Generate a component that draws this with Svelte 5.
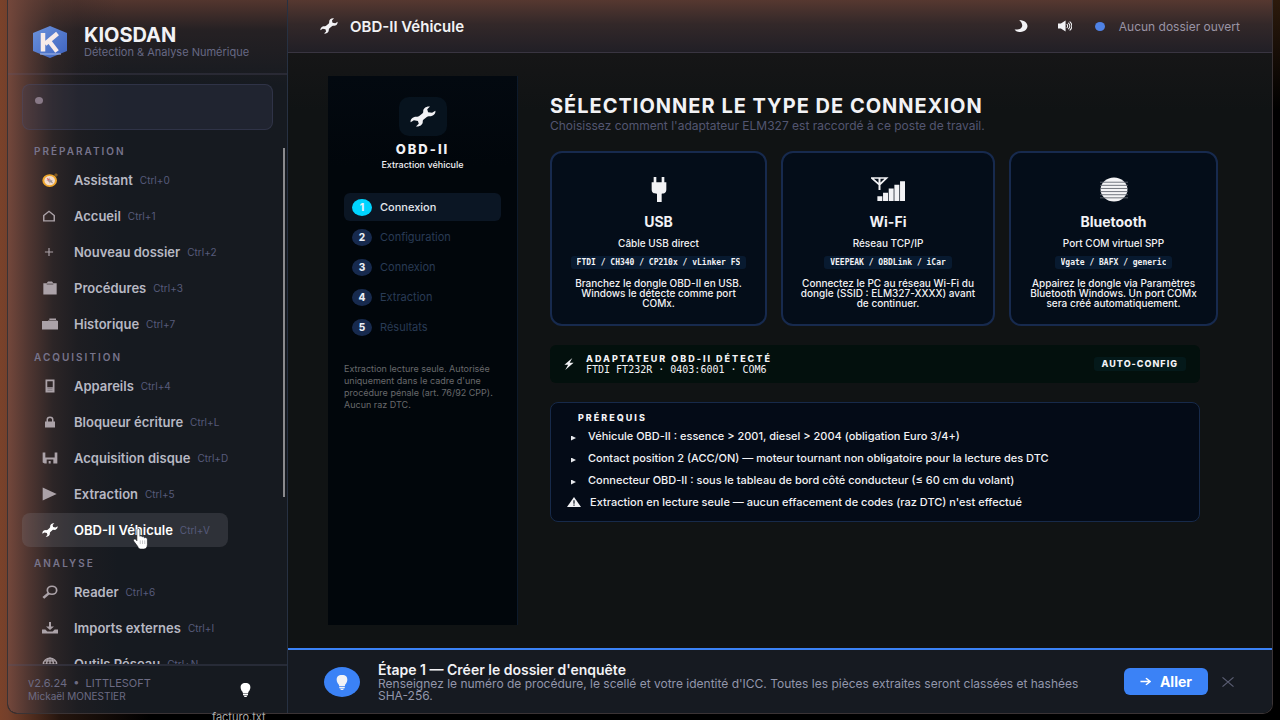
<script>
  let active = $state('OBD-II Véhicule');
  let step = $state(0);
  let showHint = $state(true);
  let query = $state('');

  const sections = [
    {
      title: 'Préparation',
      items: [
        { label: 'Assistant', key: 'Ctrl+0', icon: 'compass' },
        { label: 'Accueil', key: 'Ctrl+1', icon: 'home' },
        { label: 'Nouveau dossier', key: 'Ctrl+2', icon: 'plus' },
        { label: 'Procédures', key: 'Ctrl+3', icon: 'clipboard' },
        { label: 'Historique', key: 'Ctrl+7', icon: 'folder' },
      ],
    },
    {
      title: 'Acquisition',
      items: [
        { label: 'Appareils', key: 'Ctrl+4', icon: 'phone' },
        { label: 'Bloqueur écriture', key: 'Ctrl+L', icon: 'lock' },
        { label: 'Acquisition disque', key: 'Ctrl+D', icon: 'floppy' },
        { label: 'Extraction', key: 'Ctrl+5', icon: 'play' },
        { label: 'OBD-II Véhicule', key: 'Ctrl+V', icon: 'wrench' },
      ],
    },
    {
      title: 'Analyse',
      items: [
        { label: 'Reader', key: 'Ctrl+6', icon: 'lens' },
        { label: 'Imports externes', key: 'Ctrl+I', icon: 'import' },
        { label: 'Outils Réseau', key: 'Ctrl+N', icon: 'globe' },
      ],
    },
  ];

  const steps = ['Connexion', 'Configuration', 'Connexion', 'Extraction', 'Résultats'];

  const connections = [
    { name: 'USB', icon: 'plug', sub: 'Câble USB direct', chip: 'FTDI / CH340 / CP210x / vLinker FS', desc: 'Branchez le dongle OBD-II en USB. Windows le détecte comme port COMx.' },
    { name: 'Wi-Fi', icon: 'signal', sub: 'Réseau TCP/IP', chip: 'VEEPEAK / OBDLink / iCar', desc: 'Connectez le PC au réseau Wi-Fi du dongle (SSID : ELM327-XXXX) avant de continuer.' },
    { name: 'Bluetooth', icon: 'disc', sub: 'Port COM virtuel SPP', chip: 'Vgate / BAFX / generic', desc: 'Appairez le dongle via Paramètres Bluetooth Windows. Un port COMx sera créé automatiquement.' },
  ];

  const prereqs = [
    'Véhicule OBD-II : essence > 2001, diesel > 2004 (obligation Euro 3/4+)',
    'Contact position 2 (ACC/ON) — moteur tournant non obligatoire pour la lecture des DTC',
    'Connecteur OBD-II : sous le tableau de bord côté conducteur (≤ 60 cm du volant)',
  ];
</script>

{#snippet icon(name)}
  <svg class="icon" viewBox="0 0 24 24" preserveAspectRatio="none" fill="currentColor" stroke="none" aria-hidden="true">
    {#if name === 'wrench'}
      <path d="M18.500.6c-3.500-.6-6.500 2-6.300 5.600.1 1-.1 1.600-.8 2.300l-2.900 2.900c-.7.7-1.300.9-2.300.8C2.600 12 0 15 .6 18.500l3-2.300 3.700.8.8 3.400-2.600 3c3.500.6 6.500-2 6.300-5.600-.1-1 .1-1.600.8-2.300l2.900-2.900c.7-.7 1.300-.9 2.300-.8 3.600.2 6.200-2.800 5.600-6.300l-3 2.300-3.700-.8-.8-3.400z"/>
    {:else if name === 'compass'}
      <circle cx="11.500" cy="13" r="9.500" fill="#f3ddcc" stroke="#eda52c" stroke-width="3"/>
      <circle cx="21" cy="3.500" r="1.800" fill="none" stroke="#b87d24" stroke-width="1.300"/>
      <path d="m7 8 6 3.500-3.500 3.500z" fill="#d8606a"/><path d="m17 18-7-3 3.500-3.500z" fill="#9a9196"/><path d="m11.500 7 1 6-1 6-1-6zM6 13l5.500-1 5.500 1-5.500 1z" fill="#a79da0"/>
    {:else if name === 'home'}
      <path fill="none" stroke="currentColor" stroke-width="2.500" d="M3 21.500V11l9-8.500 9 8.500v10.500z"/>
    {:else if name === 'plus'}
      <path d="M11 5h2v6h6v2h-6v6h-2v-6H5v-2h6z"/>
    {:else if name === 'clipboard'}
      <path d="M2 4h5l2-3h6l2 3h5v19H2z"/><path d="M7 6h10V4.500H7z" fill="#4d4446"/>
    {:else if name === 'folder'}
      <path d="M0 6h24v17H0z"/><path d="M11 1h10v3H11zM9 5h14v2H9z"/>
    {:else if name === 'phone'}
      <path fill-rule="evenodd" d="M3 1h18v22H3zm3.500 3v10h11V4z"/><path d="M7 16.500h10M7 19.500h10" stroke="#655c62"/>
    {:else if name === 'lock'}
      <path d="M2 11h20v12H2z"/><path fill="none" stroke="currentColor" stroke-width="3" d="M6.500 12V7c0-6 11-6 11 0v5"/>
    {:else if name === 'floppy'}
      <path fill-rule="evenodd" d="M1 1h22v22H4l-3-2zm4 0v10h14V1zm2 14v8h3v-5h3v5h4v-8z"/>
    {:else if name === 'play'}
      <path d="M1 1 22 12 1 23z"/>
    {:else if name === 'lens'}
      <circle cx="15" cy="9" r="7" fill="none" stroke="currentColor" stroke-width="2.600"/><path d="M10.500 14 2 22" stroke="currentColor" stroke-width="4"/>
    {:else if name === 'import'}
      <path d="M10.500 0h3v9H18l-6 7-6-7h4.500zM0 15h5l3 4h8l3-4h5v8H0z"/>
    {:else if name === 'globe'}
      <g fill="none" stroke="currentColor" stroke-width="2"><circle cx="12" cy="12" r="10"/><ellipse cx="12" cy="12" rx="5" ry="10"/><path d="M12 2v20M2 12h20M4 6.500h16M4 17.500h16"/></g>
    {:else if name === 'plug'}
      <path d="M4 0h4v5h8V0h4v5h3v7c0 3-3 4-7 4v8H9v-8c-5 0-8-1-8-4V5h3z"/>
    {:else if name === 'signal'}
      <path d="M4.500 18.500H8V23H4.500zM8.500 15H12v8H8.500zM12.500 11H16v12h-3.500zM16.500 7.500H20V23h-3.500zM20.500 4H24v19h-3.500z"/>
      <path fill="none" stroke="currentColor" stroke-width="1.400" d="M.5 1h10.500L6 7.500zM6 1v11.500"/>
    {:else if name === 'disc'}
      <circle cx="12" cy="12" r="11.500" fill="#f4f4f6"/><path d="M0 5h24M0 8h24M0 11h24M0 14h24M0 17h24M0 20h24" stroke="#62666f" stroke-width=".8"/>
    {:else if name === 'moon'}
      <path d="M9 0c19 1 18 23 2 24-4 0-8-1-10-5 14 1 17-9 8-19z"/>
    {:else if name === 'speaker'}
      <path d="M0 7h5l8-6v22l-8-6H0z"/><path fill="none" stroke="currentColor" stroke-width="1.800" d="M15 8c2 2 2 6 0 8M17.500 5.500c3.500 4 3.500 9 0 13M20 3c5 5 5 13 0 18"/>
    {:else if name === 'bulb'}
      <path d="M12 0c14 0 12 11 6.500 15l-1 3h-11l-1-3C0 11-2 0 12 0zM6.500 19h11v2h-11zM8 22h8l-2 2h-4z"/>
    {:else if name === 'bolt'}
      <path d="M20 0 1 13.500h9L3 24l20-14.500h-9.500z"/>
    {:else if name === 'warning'}
      <path d="M12 0 24 24H0z"/><path d="M11 8h2v8h-2zM11 18h2v3h-2z" fill="#050c18"/>
    {:else if name === 'arrow'}
      <path fill="none" stroke="currentColor" stroke-width="3.500" d="M1 12h20M13 3l9 9-9 9"/>
    {:else if name === 'close'}
      <path fill="none" stroke="currentColor" stroke-width="2.400" d="m1 1 22 22M23 1 1 23"/>
    {:else if name === 'hand'}
      <path d="M6.500 2.500C6.500-.2 10.500-.2 10.500 2.500V9c1-1 3-.5 3 .8 1-1 3-.4 3 1 1-1 3-.3 4 1V18c0 3-2 5-5 5h-4c-2 0-3-1-4-3l-5.500-6c0-2.500 3-2.500 4.500 0z" fill="#fff" stroke="#15161a" stroke-width=".7"/>
      <path d="M11 13.500v4M14 13.500v4M17 13.500v4" stroke="#8a8b90" stroke-width=".6"/>
    {/if}
  </svg>
{/snippet}

<div class="desktop">
  <div class="window">
    <aside class="sidebar">
      <div class="brand">
        <svg class="logo" viewBox="0 0 36 34" preserveAspectRatio="none" aria-hidden="true">
          <defs>
            <linearGradient id="hex" x1="0" y1="0" x2="1" y2="1">
              <stop offset="0" stop-color="#6c93dc"/>
              <stop offset="1" stop-color="#3d62be"/>
            </linearGradient>
          </defs>
          <path d="M18 1 35 8v18l-17 7L1 26V8z" fill="url(#hex)"/>
          <path d="M11 8v18.500M25.500 8.500 13 19M17 16l8 10.500" stroke="#f7ebe9" stroke-width="4.500" fill="none"/>
          <path d="M8 29h21" stroke="#a9bce8" stroke-width="1"/>
        </svg>
        <div>
          <div class="brand-name">KIOSDAN</div>
          <div class="brand-sub">Détection &amp; Analyse Numérique</div>
        </div>
      </div>

      <label class="search">
        <span class="search-dot"></span>
        <input type="text" aria-label="Rechercher" bind:value={query} />
      </label>

      <nav class="nav">
        {#each sections as section}
          <h2>{section.title}</h2>
          {#each section.items as item}
            <button type="button" class="nav-item" class:active={active === item.label} onclick={() => active = item.label}>
              <span class="nav-icon {item.icon}">{@render icon(item.icon)}</span>
              <span class="nav-label">{item.label}</span>
              <span class="nav-key">{item.key}</span>
              {#if item.icon === 'wrench'}
                <span class="pointer">{@render icon('hand')}</span>
              {/if}
            </button>
          {/each}
        {/each}
        <span class="scroll-thumb"></span>
      </nav>

      <footer class="side-foot">
        <div>
          <div class="version">v2.6.24 &nbsp;•&nbsp; LITTLESOFT</div>
          <div>Mickaël MONESTIER</div>
        </div>
        <button type="button" class="tip" aria-label="Astuces">{@render icon('bulb')}</button>
      </footer>
    </aside>

    <main class="main">
      <header class="topbar">
        <span class="top-icon">{@render icon('wrench')}</span>
        <h1>{active}</h1>
        <div class="top-actions">
          <button type="button" class="top-btn" aria-label="Mode sombre">{@render icon('moon')}</button>
          <button type="button" class="top-btn" aria-label="Son">{@render icon('speaker')}</button>
          <span class="status"><span class="status-dot"></span>Aucun dossier ouvert</span>
        </div>
      </header>

      <div class="content">
        <aside class="wizard">
          <div class="wizard-icon">{@render icon('wrench')}</div>
          <div class="wizard-title">OBD-II</div>
          <div class="wizard-sub">Extraction véhicule</div>
          <ol class="steps">
            {#each steps as label, i}
              <li>
                <button type="button" class="step" class:current={step === i} onclick={() => step = i}>
                  <span class="step-num">{i + 1}</span>{label}
                </button>
              </li>
            {/each}
          </ol>
          <p class="legal">Extraction lecture seule. Autorisée uniquement dans le cadre d'une procédure pénale (art. 76/92 CPP). Aucun raz DTC.</p>
        </aside>

        <section class="panel">
          <h2 class="panel-title">SÉLECTIONNER LE TYPE DE CONNEXION</h2>
          <p class="panel-sub">Choisissez comment l'adaptateur ELM327 est raccordé à ce poste de travail.</p>

          <div class="cards">
            {#each connections as c}
              <button type="button" class="card">
                <span class="card-icon {c.icon}">{@render icon(c.icon)}</span>
                <span class="card-name">{c.name}</span>
                <span class="card-sub">{c.sub}</span>
                <span class="chip"><span>{c.chip}</span></span>
                <span class="card-desc">{c.desc}</span>
              </button>
            {/each}
          </div>

          <div class="detected">
            <span class="bolt">{@render icon('bolt')}</span>
            <div>
              <div class="detected-title">ADAPTATEUR OBD-II DÉTECTÉ</div>
              <div class="detected-info">FTDI FT232R · 0403:6001 · COM6</div>
            </div>
            <span class="auto">AUTO-CONFIG</span>
          </div>

          <div class="prereq">
            <h3>PRÉREQUIS</h3>
            <ul>
              {#each prereqs as text}
                <li><span class="bullet"></span>{text}</li>
              {/each}
              <li><span class="warn-icon">{@render icon('warning')}</span>Extraction en lecture seule — aucun effacement de codes (raz DTC) n'est effectué</li>
            </ul>
          </div>
        </section>
      </div>

      {#if showHint}
        <div class="hint">
          <span class="hint-icon">{@render icon('bulb')}</span>
          <div class="hint-text">
            <strong>Étape 1 — Créer le dossier d'enquête</strong>
            <p>Renseignez le numéro de procédure, le scellé et votre identité d'ICC. Toutes les pièces extraites seront classées et hashées SHA-256.</p>
          </div>
          <button type="button" class="go">{@render icon('arrow')}Aller</button>
          <button type="button" class="close" aria-label="Fermer" onclick={() => showHint = false}>{@render icon('close')}</button>
        </div>
      {/if}
    </main>
  </div>
  <span class="desk-file">facturo.txt</span>
</div>

<style>
  :global(body) { margin: 0; background: #000; }
  * { box-sizing: border-box; }
  button { font: inherit; color: inherit; border: none; background: none; padding: 0; cursor: pointer; }
  h1, h2, h3, p, ul, ol { margin: 0; padding: 0; list-style: none; }
  .icon { display: block; width: 100%; height: 100%; }

  .desktop {
    position: relative; height: 100vh; overflow: hidden;
    padding: 0 7px 6px;
    background: linear-gradient(90deg, #7a422a 0, #74402b 8px, #24150e 60px, transparent 150px), linear-gradient(#2c1a0c, #000 110px);
    font-family: Inter, "Liberation Sans", sans-serif; color: #f2f2f5;
  }
  .window {
    display: flex; height: 100%; overflow: hidden;
    border: 1px solid #3a3335; border-top: none; border-radius: 0 0 10px 10px;
    background: #101314;
  }
  .desk-file { position: absolute; left: 212px; top: 710px; font-size: 11px; line-height: 14px; color: #a9a9a9; }

  /* Sidebar */
  .sidebar {
    flex: 0 0 280px; display: flex; flex-direction: column;
    border-right: 1px solid #273142;
    background:
      linear-gradient(90deg, #73473b 0, rgba(100, 64, 55, .75) 20px, rgba(70, 50, 46, .45) 45px, rgba(50, 38, 38, .25) 70px, transparent 110px),
      linear-gradient(rgba(104, 63, 51, .75), rgba(60, 42, 40, .4) 30px, transparent 85px),
      #161a20;
  }
  .brand {
    display: flex; align-items: center; gap: 16px; height: 75px;
    padding: 10px 24px 0; border-bottom: 2px solid rgba(90, 85, 110, .25);
  }
  .logo { width: 36px; height: 34px; flex: none; }
  .brand-name { font-size: 20px; line-height: 22px; font-weight: 700; }
  .brand-sub { font-size: 11px; line-height: 13px; color: #676984; white-space: nowrap; }
  .search {
    display: flex; gap: 8px; height: 46px; margin: 9px 14px 0; padding: 12px;
    border: 1px solid rgba(75, 80, 115, .35); border-radius: 8px;
    background: rgba(62, 66, 90, .28);
  }
  .search-dot { width: 8px; height: 7px; border-radius: 50%; background: #887987; flex: none; }
  .search input { flex: 1; min-width: 0; border: none; outline: none; background: none; font: inherit; font-size: 12px; color: inherit; }

  .nav { position: relative; flex: 1; min-height: 0; overflow: hidden; padding: 7px 14px 0; }
  .nav h2 {
    height: 26px; padding-left: 12px; line-height: 28px;
    font-size: 10px; font-weight: 600; letter-spacing: 2px; text-transform: uppercase; color: #77748b;
  }
  .nav-item {
    position: relative; display: flex; align-items: center; height: 34px; margin-bottom: 2px;
    padding: 0 18px; border-radius: 8px; white-space: nowrap;
  }
  .nav-item.active { background: rgba(130, 130, 140, .22); color: #fff; }
  .nav-icon { width: 16px; height: 14px; margin: 0 16px 0 2px; color: #aba2a8; }
  .nav-icon.home, .nav-icon.plus { width: 14px; height: 12px; margin: 0 18px 0 2px; }
  .nav-icon.plus { height: 14px; }
  .nav-icon.folder, .nav-icon.import, .nav-icon.floppy { height: 12px; }
  .nav-icon.phone, .nav-icon.lock { width: 12px; height: 14px; margin: 0 18px 0 4px; }
  .nav-icon.lock { height: 12px; }
  .active .nav-icon { color: #fff; }
  .nav-label { font-size: 13px; font-weight: 600; color: #b7b8c3; }
  .active .nav-label { color: #fff; }
  .nav-key { margin-left: 7px; font-size: 10px; color: #575b7b; }
  .pointer { position: absolute; left: 110px; top: 15px; width: 18px; height: 22px; }
  .scroll-thumb { position: absolute; right: 2px; top: 18px; width: 2px; height: 349px; background: #8a8a8d; }

  .side-foot {
    display: flex; align-items: center; justify-content: space-between; height: 49px;
    padding: 0 36px 0 20px; border-top: 2px solid rgba(80, 82, 110, .3);
    font-size: 10px; line-height: 12px; color: #6c6b83;
  }
  .version { font-size: 11px; line-height: 13px; }
  .tip { width: 11px; height: 14px; color: #fff; }

  /* Main area */
  .main {
    flex: 1; min-width: 0; display: flex; flex-direction: column;
    background: linear-gradient(#161617 53px, #101314 110px);
  }
  .topbar {
    display: flex; align-items: center; height: 53px; flex: none; padding: 0 32px;
    border-bottom: 1px solid #393541;
    background: linear-gradient(#563830, #332829 24px, #211f26);
  }
  .top-icon { width: 18px; height: 16px; margin-right: 12px; }
  h1 { font-size: 15px; font-weight: 600; }
  .top-actions { display: flex; align-items: center; margin-left: auto; }
  .top-btn { width: 14px; height: 12px; margin-right: 30px; }
  .top-btn + .top-btn { margin-right: 23px; }
  .status { display: flex; align-items: center; font-size: 12px; color: #9a94a5; }
  .status-dot { width: 10px; height: 9px; margin-right: 14px; border-radius: 50%; background: #4f82e5; }

  .content { flex: 1; min-height: 0; display: flex; padding: 23px 72px 23px 40px; }
  .wizard {
    flex: 0 0 190px; padding: 21px 16px 0; text-align: center;
    border-right: 1px solid #0d1a2b; background: linear-gradient(#030910, #01060b 90px);
  }
  .wizard-icon { width: 48px; height: 39px; margin: 0 auto; padding: 9px 11px; border-radius: 10px; background: #07131e; }
  .wizard-title { margin-top: 6px; font-size: 13px; line-height: 14px; font-weight: 800; letter-spacing: 2px; }
  .wizard-sub { margin-top: 3px; font-size: 9px; line-height: 12px; font-weight: 500; }
  .steps { margin-top: 22px; }
  .step {
    display: flex; align-items: center; width: 100%; height: 28px; margin-bottom: 2px; padding: 0 8px;
    border-radius: 6px; font-size: 11px; color: #293b55;
  }
  .step.current { background: #0b1624; color: #e4e7ed; font-weight: 500; }
  .step-num {
    width: 20px; margin-right: 8px; border-radius: 50%; background: #172a4e;
    font-size: 10px; line-height: 17px; font-weight: 800; color: #e9edf4;
  }
  .step.current .step-num { background: #00d4ff; }
  .legal { margin-top: 22px; font-size: 9px; line-height: 12px; text-align: left; color: #68696c; }

  .panel { flex: 1; min-width: 0; padding: 19px 0 0 32px; }
  .panel-title { font-size: 20px; line-height: 22px; font-weight: 700; letter-spacing: 1px; white-space: nowrap; }
  .panel-sub { margin-top: 1px; font-size: 12px; line-height: 16px; color: #535671; }

  .cards { display: grid; grid-template-columns: 217fr 214fr 209fr; gap: 14px; margin: 17px -18px 0 0; }
  .card {
    display: flex; flex-direction: column; align-items: center; min-width: 0; height: 175px; padding: 24px 16px 0;
    border: 2px solid #172a4e; border-radius: 12px; background: #040d19; text-align: center;
  }
  .card-icon { width: 16px; height: 25px; }
  .card-icon.signal { width: 34px; }
  .card-icon.disc { width: 28px; }
  .card-name { margin-top: 11px; font-size: 14px; line-height: 18px; font-weight: 700; }
  .card-sub { margin-top: 6px; font-size: 10px; line-height: 12px; font-weight: 500; }
  .chip { max-width: 100%; margin-top: 7px; padding: 0 6px; border-radius: 3px; background: #081a30; }
  .chip span {
    display: block; overflow: hidden; white-space: nowrap;
    font: bold 8px/13px "DejaVu Sans Mono", "Liberation Mono", monospace;
  }
  .card-desc { margin-top: 9px; font-size: 10px; line-height: 10px; font-weight: 500; }

  .detected {
    display: flex; align-items: center; gap: 12px; height: 38px; margin-top: 19px; padding: 0 14px;
    border-radius: 6px; background: #03100d;
  }
  .bolt { width: 10px; height: 12px; }
  .detected-title { font-size: 9px; line-height: 11px; font-weight: 800; letter-spacing: 2px; }
  .detected-info { font: 10px/11px "DejaVu Sans Mono", "Liberation Mono", monospace; }
  .auto {
    margin-left: auto; padding: 0 8px; border-radius: 3px; background: #04191a;
    font-size: 9px; line-height: 14px; font-weight: 800; letter-spacing: 1px;
  }

  .prereq { height: 120px; margin-top: 19px; padding: 8px 16px; border: 1px solid #172a4a; border-radius: 8px; background: #040b17; }
  .prereq h3 { padding-left: 11px; font-size: 9px; line-height: 14px; font-weight: 800; letter-spacing: 2px; }
  .prereq li { display: flex; align-items: center; height: 22px; font-size: 11px; font-weight: 500; }
  .bullet {
    width: 5px; height: 5px; margin: 4px 12px 0 4px; background: #e6e8ec;
    clip-path: polygon(0 0, 100% 50%, 0 100%);
  }
  .warn-icon { width: 14px; height: 10px; margin-right: 9px; }

  .hint {
    display: flex; align-items: center; min-height: 65px; flex: none; padding: 0 38px 0 36px;
    border-top: 2px solid #3b82f6; background: #161a21;
  }
  .hint-icon { width: 36px; height: 30px; padding: 8px 12px 7px; border-radius: 50%; background: #3b82f6; }
  .hint-text { flex: 1; margin: 0 32px 0 18px; }
  .hint-text strong { display: block; font-size: 14px; line-height: 16px; font-weight: 600; }
  .hint-text p { font-size: 12px; line-height: 12px; color: #9296ab; }
  .go {
    display: flex; align-items: center; gap: 9px; height: 27px; padding: 0 16px; border-radius: 6px;
    background: #3b82f6; color: #fff; font-size: 14px; font-weight: 700;
  }
  .go .icon { width: 11px; height: 9px; }
  .close { width: 12px; height: 10px; margin-left: 14px; color: #5a5d72; }
</style>
